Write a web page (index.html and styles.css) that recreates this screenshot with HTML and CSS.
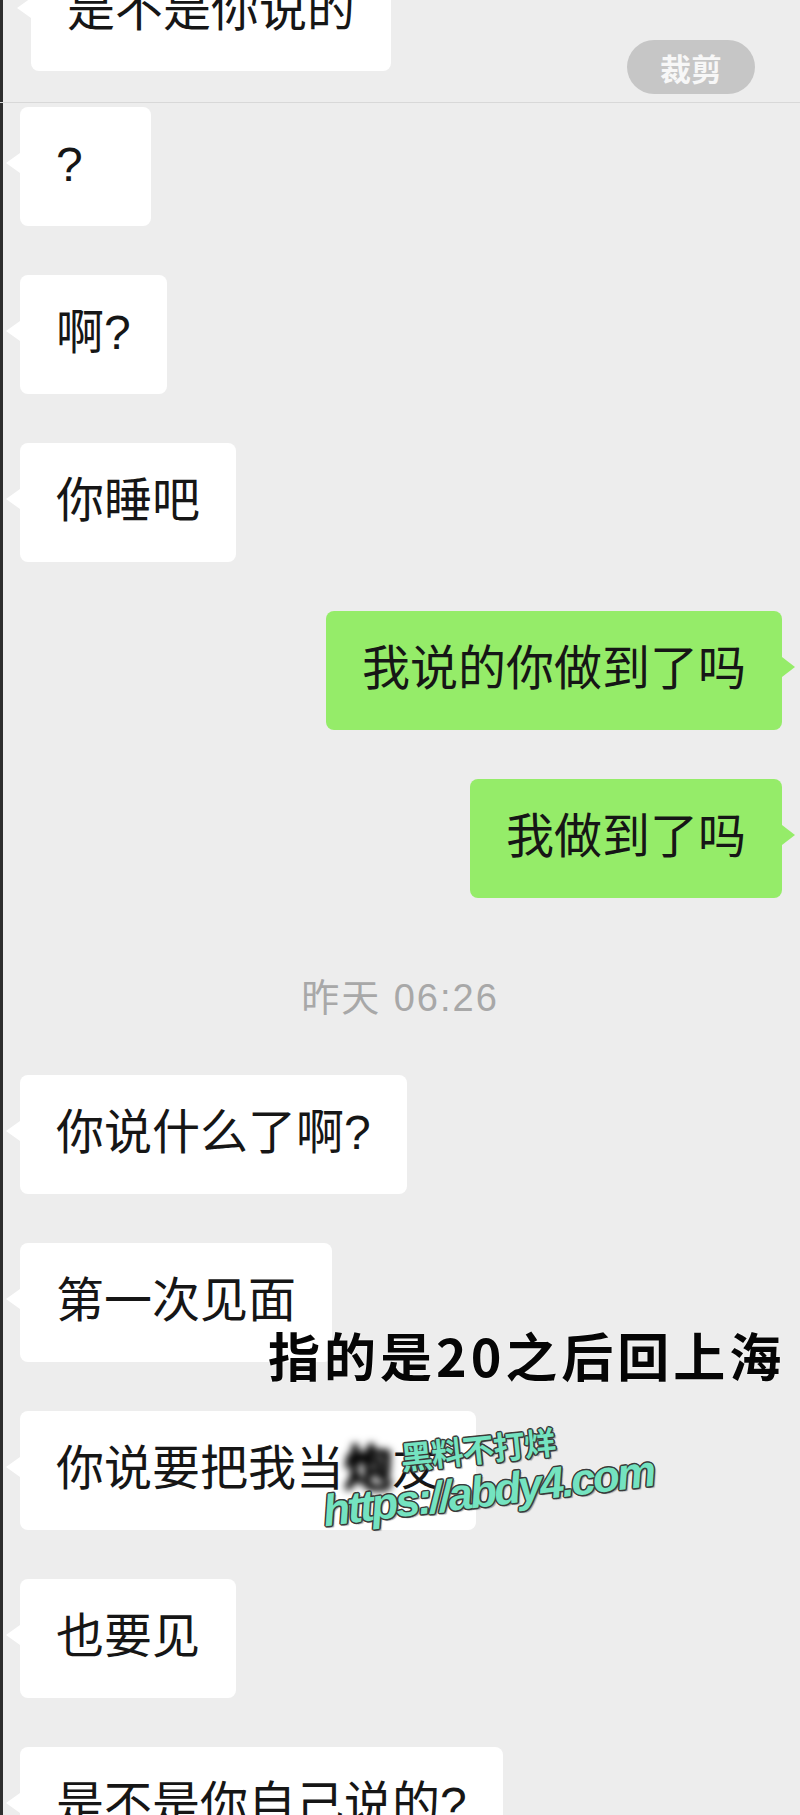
FILE: index.html
```html
<!DOCTYPE html>
<html lang="zh-CN">
<head>
<meta charset="utf-8">
<title>聊天记录</title>
<link rel="stylesheet" href="styles.css">
</head>
<body>
<div class="screen">
  <div class="top-seg">
    <div class="bubble in first">是不是你说的</div>
  </div>
  <div class="seam"></div>
  <div class="chat">
    <div class="bubble in min">?</div>
    <div class="bubble in">啊?</div>
    <div class="bubble in">你睡吧</div>
    <div class="bubble out">我说的你做到了吗</div>
    <div class="bubble out">我做到了吗</div>
    <div class="time">昨天 06:26</div>
    <div class="bubble in">你说什么了啊?</div>
    <div class="bubble in">第一次见面</div>
    <div class="bubble in">你说要把我当<span class="blur">炮</span>友</div>
    <div class="bubble in">也要见</div>
    <div class="bubble in">是不是你自己说的?</div>
  </div>
  <div class="crop-btn">裁剪</div>
  <div class="caption">指的是20之后回上海</div>
  <div class="wm wm-cn">黑料不打烊</div>
  <div class="wm wm-url">https://abdy4.com</div>
</div>
</body>
</html>
```

FILE: styles.css
```css
html, body {
  margin: 0;
  padding: 0;
  background: #ededed;
}

.screen {
  position: relative;
  width: 800px;
  height: 1815px;
  overflow: hidden;
  background: #ededed;
  box-shadow: inset 3px 0 0 #2e2e2e;
  font-family: "Liberation Sans", "Noto Sans CJK SC", sans-serif;
}

.top-seg {
  display: flex;
  align-items: flex-start;
}

.seam {
  height: 1px;
  margin-top: 31px;
  background: #d8d8d8;
}

.chat {
  display: flex;
  flex-direction: column;
  align-items: flex-start;
  gap: 49px;
  padding-top: 4px;
}

.bubble {
  position: relative;
  box-sizing: border-box;
  padding: 33px 36px 37px;
  font-size: 48px;
  line-height: 49px;
  color: #161616;
  border-radius: 8px;
  white-space: nowrap;
}

.in {
  background: #ffffff;
  margin-left: 20px;
}

.in::before {
  content: "";
  position: absolute;
  left: -14px;
  top: calc(50% - 14px);
  border-top: 10px solid transparent;
  border-bottom: 10px solid transparent;
  border-right: 14px solid #ffffff;
}

.out {
  background: #95ec69;
  align-self: flex-end;
  margin-right: 18px;
}

.out::after {
  content: "";
  position: absolute;
  right: -13px;
  top: calc(50% - 14px);
  border-top: 10px solid transparent;
  border-bottom: 10px solid transparent;
  border-left: 13px solid #95ec69;
}

.first {
  margin-left: 31px;
  margin-top: -48px;
}

.min {
  min-width: 131px;
}

.time {
  align-self: stretch;
  box-sizing: border-box;
  height: 79px;
  padding-top: 24px;
  font-size: 38px;
  line-height: 55px;
  letter-spacing: 2px;
  text-align: center;
  color: #a8a8a8;
}

.blur {
  display: inline-block;
  color: #000;
  filter: blur(3.5px);
  text-shadow: 0 0 1px #000, 0 0 2px #000, 0 0 3px #000, 0 0 5px #000, 0 0 5px #000;
}

.crop-btn {
  position: absolute;
  top: 40px;
  right: 45px;
  width: 128px;
  height: 54px;
  border-radius: 27px;
  background: #c6c6c6;
  color: #f7f7f7;
  font-family: "Noto Sans CJK SC", sans-serif;
  font-size: 31px;
  font-weight: 700;
  display: flex;
  align-items: center;
  justify-content: center;
}

.caption {
  position: absolute;
  left: 268px;
  top: 1329px;
  font-family: "Noto Sans CJK SC", sans-serif;
  font-size: 52px;
  line-height: 51px;
  font-weight: 700;
  letter-spacing: 4px;
  color: #050505;
  white-space: nowrap;
  text-shadow: 0 0 2px #ffffff;
}

.wm {
  position: absolute;
  color: #74e3c0;
  font-weight: 700;
  white-space: nowrap;
  text-shadow:
    1.5px 0 0 #3a3a3a, -1.5px 0 0 #3a3a3a,
    0 1.5px 0 #3a3a3a, 0 -1.5px 0 #3a3a3a,
    1px 1px 0 #3a3a3a, -1px -1px 0 #3a3a3a,
    1px -1px 0 #3a3a3a, -1px 1px 0 #3a3a3a,
    2px 2px 1px rgba(0, 0, 0, 0.35);
}

.wm-cn {
  left: 400px;
  top: 1430px;
  font-family: "Noto Sans CJK SC", sans-serif;
  font-size: 32px;
  line-height: 36px;
  letter-spacing: -1px;
  transform: rotate(-6deg);
}

.wm-url {
  left: 322px;
  top: 1466px;
  font-family: "Liberation Sans", sans-serif;
  font-size: 44px;
  line-height: 50px;
  font-style: italic;
  letter-spacing: -2.6px;
  transform: rotate(-7deg);
}
```
